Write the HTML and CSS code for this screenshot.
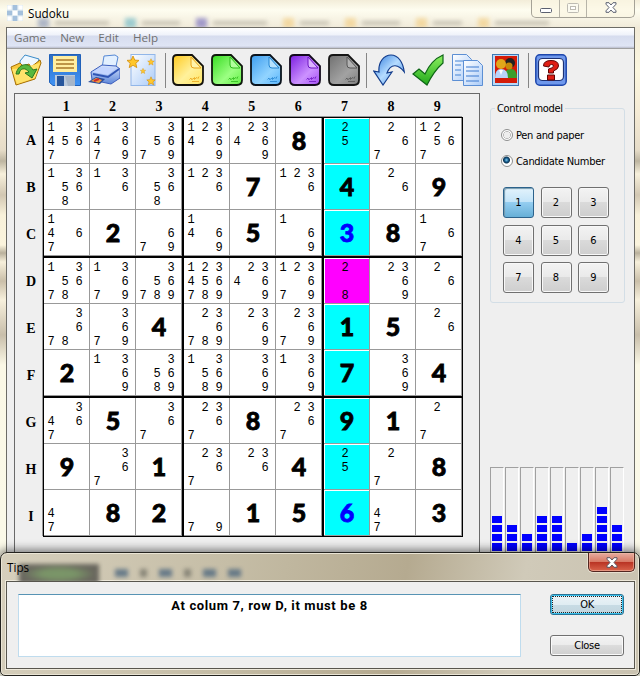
FILE: index.html
```
<!DOCTYPE html>
<html lang="en">
<head>
<meta charset="utf-8">
<title>Sudoku</title>
<link rel="stylesheet" href="styles.css">
</head>
<body>
<svg class="defs" width="0" height="0">
  <defs>
    <linearGradient id="gy" x1="0" y1="0" x2="1" y2="1"><stop offset="0" stop-color="#ffc91e"/><stop offset=".55" stop-color="#fff19b"/><stop offset="1" stop-color="#ffe566"/></linearGradient>
    <linearGradient id="gg" x1="0" y1="0" x2="1" y2="1"><stop offset="0" stop-color="#35dc20"/><stop offset=".6" stop-color="#9cff83"/><stop offset="1" stop-color="#62ef45"/></linearGradient>
    <linearGradient id="gb" x1="0" y1="0" x2="1" y2="1"><stop offset="0" stop-color="#3b9cef"/><stop offset=".6" stop-color="#92d4ff"/><stop offset="1" stop-color="#58b4fb"/></linearGradient>
    <linearGradient id="gp" x1="0" y1="0" x2="1" y2="1"><stop offset="0" stop-color="#7a1ce0"/><stop offset=".6" stop-color="#cc92ff"/><stop offset="1" stop-color="#a34cf4"/></linearGradient>
    <linearGradient id="gk" x1="0" y1="0" x2="1" y2="1"><stop offset="0" stop-color="#707070"/><stop offset=".6" stop-color="#a2a2a2"/><stop offset="1" stop-color="#7e7e7e"/></linearGradient>
    <linearGradient id="arrow" x1="0" y1="0" x2="1" y2="1"><stop offset="0" stop-color="#2a77dc"/><stop offset=".5" stop-color="#b5dcff"/><stop offset="1" stop-color="#3c83e0"/></linearGradient>
    <linearGradient id="tick" x1="0" y1="0" x2="0" y2="1"><stop offset="0" stop-color="#8cf060"/><stop offset="1" stop-color="#21a81a"/></linearGradient>
    <linearGradient id="sheet" x1="0" y1="0" x2="1" y2="1"><stop offset="0" stop-color="#fff"/><stop offset="1" stop-color="#aacbf8"/></linearGradient>
    <linearGradient id="disk" x1="0" y1="0" x2="0" y2="1"><stop offset="0" stop-color="#2f6fc4"/><stop offset="1" stop-color="#3f93f5"/></linearGradient>
    <linearGradient id="print" x1="0" y1="0" x2="0" y2="1"><stop offset="0" stop-color="#d9e6ff"/><stop offset="1" stop-color="#5d86d8"/></linearGradient>
    <path id="star" d="M0-6 1.8-1.9 6-1.6 2.8 1.3 3.8 5.6 0 3.3-3.8 5.6-2.8 1.3-6-1.6-1.8-1.9Z"/>
    <path id="scribble" d="m17.500 25.500 1.500-1.500.5 1.500 1.500-.5 1.500-1.500v2l1.500-1.500 1-.5 1 1 1-2M20 27.500h7" fill="none" stroke="currentColor" stroke-width=".8"/>
  </defs>
</svg>
<div class="desktop">
  <main class="window">
    <header class="titlebar">
      <svg class="app-icon" width="16" height="16"><rect width="16" height="16" fill="#f6fafc"/><path d="M5.500 0h5v5h-5zM0 5.500h5v5H0zM11 5.500h5v5h-5zM5.500 11h5v5h-5z" fill="#a4c0dc"/><path d="M0 0h5v5H0zM11 0h5v5h-5zM5.500 5.500h5v5h-5zM0 11h5v5H0zM11 11h5v5h-5z" fill="#fff" stroke="#cfdeea" stroke-width=".6"/></svg>
      <h1>Sudoku</h1>
      <div class="ghosts"><i class="g1"></i><i class="w l"></i><i class="g2"></i><i class="w"></i><i class="g3"></i><i class="w l"></i><i class="g4"></i><i class="w s"></i><i class="g4"></i><i class="w"></i><i class="g4"></i><i class="w s"></i><i class="g4"></i><i class="w l"></i></div>
      <div class="controls">
        <span class="c-min"><svg width="12" height="5"><rect x=".5" y=".5" width="11" height="4" rx="1" fill="#fff" stroke="#5b6070"/></svg></span>
        <span class="c-max"><svg width="12" height="10"><rect x=".5" y=".5" width="11" height="9" rx="1" fill="#fbfaf0" stroke="#bdbbb3"/><rect x="3.500" y="3.500" width="5" height="3" fill="#fff" stroke="#bdbbb3"/></svg></span>
        <span class="c-close"><svg width="12" height="11" viewBox="0 0 12 11"><path d="M1 .7h3L6 3 8 .7h3v1.500L8 5.500l3 3.300v1.500H8L6 8l-2 2.300H1V8.800l3-3.300L1 2.200z" fill="#fff" stroke="#5b6070"/></svg></span>
      </div>
    </header>
    <div class="client">
      <nav class="menu"><span>Game</span><span>New</span><span>Edit</span><span>Help</span></nav>
      <div class="toolbar">
        <svg viewBox="0 0 32 32"><path d="M10 7 15 1l14 4-5 15-13 3z" fill="#eef7ff" stroke="#3a8bc8"/><path d="M1 13 10 9l3 3 6-2 2 3 9-7 1 3-6 16L6 31z" fill="#f9c83a" stroke="#a56f05"/><path d="M2 15 12 14l18-5-5 15L7 30z" fill="#ffe36b"/><path d="M6 20C8 10 18 7 23 16l4-1-5 9-7-5 4-1c-4-5-9-4-10 2z" fill="#56b83e" stroke="#26781f"/></svg>
        <svg viewBox="0 0 32 32"><path d="M.5.5h31v31H4l-3.500-3z" fill="url(#disk)" stroke="#2161b9"/><rect x="4" y="2" width="24" height="16" fill="#ffeea0"/><path d="M7 6h18M7 10h18M7 14h18" stroke="#a9782a" stroke-width="1.500"/><rect x="6" y="21" width="20" height="11" fill="#b9c9dc"/><rect x="8" y="22" width="7" height="10" fill="#27569c"/><path d="M16 22h10v10h-7z" fill="#a6b5c8"/></svg>
        <svg viewBox="0 0 32 32"><path d="M14 14 16 2l11-1 3 2-3 14z" fill="#e3f0ff" stroke="#5588d5"/><path d="M3 18 14 11l14 1 4 3v9l-9 6-19-4z" fill="url(#print)" stroke="#3c5ebd"/><path d="m4 18 10-5 13 2-7 6z" fill="#c4d5ff"/><path d="m5 20 15 3 11-8" fill="none" stroke="#3055b5" stroke-width="2"/><path d="m0 28 8-5 9 2-5 5z" fill="#2c4d98"/><path d="m3 27 5-3 6 2-3 3z" fill="#f29a3c"/><path d="m6 27 5-2" stroke="#cc2a30" stroke-width="2"/></svg>
        <svg viewBox="0 0 32 32"><rect x="4" y=".5" width="24" height="31" fill="url(#sheet)" stroke="#91b6e9"/><g fill="#ffc72c" stroke="#d38b06" stroke-width=".8"><use href="#star" x="6" y="8"/><use href="#star" transform="translate(24 8) scale(.55)"/><use href="#star" transform="translate(16 17) scale(.45)"/><use href="#star" transform="translate(24 27) scale(.7)"/></g></svg>
        <i class="sep"></i>
        <svg viewBox="0 0 32 32" color="#e9a319"><path d="M5 1h15l11 11v14q0 5-5 5H6q-5 0-5-5V5q0-4 4-4z" fill="url(#gy)" stroke="#14120c" stroke-width="1.800"/><path d="M19 3v8q0 3 3 3h7z" fill="#fff3a9" stroke="currentColor"/><use href="#scribble"/></svg>
        <svg viewBox="0 0 32 32" color="#2db91b"><path d="M5 1h15l11 11v14q0 5-5 5H6q-5 0-5-5V5q0-4 4-4z" fill="url(#gg)" stroke="#0e180c" stroke-width="1.800"/><path d="M19 3v8q0 3 3 3h7z" fill="#b1ff9d" stroke="currentColor"/><use href="#scribble"/></svg>
        <svg viewBox="0 0 32 32" color="#2484d0"><path d="M5 1h15l11 11v14q0 5-5 5H6q-5 0-5-5V5q0-4 4-4z" fill="url(#gb)" stroke="#0b131c" stroke-width="1.800"/><path d="M19 3v8q0 3 3 3h7z" fill="#b6e2ff" stroke="currentColor"/><use href="#scribble"/></svg>
        <svg viewBox="0 0 32 32" color="#6c15c2"><path d="M5 1h15l11 11v14q0 5-5 5H6q-5 0-5-5V5q0-4 4-4z" fill="url(#gp)" stroke="#120a1c" stroke-width="1.800"/><path d="M19 3v8q0 3 3 3h7z" fill="#dcb4ff" stroke="currentColor"/><use href="#scribble"/></svg>
        <svg viewBox="0 0 32 32" color="#575757"><path d="M5 1h15l11 11v14q0 5-5 5H6q-5 0-5-5V5q0-4 4-4z" fill="url(#gk)" stroke="#151515" stroke-width="1.800"/><path d="M19 3v8q0 3 3 3h7z" fill="#b3b3b3" stroke="currentColor"/><use href="#scribble"/></svg>
        <i class="sep"></i>
        <svg viewBox="0 0 32 32"><path d="M.8 17 6 18C5 8 11 1 18 1c7 0 12 7 13.300 17C26 11 18 8 14 19l5-1-9 13z" fill="url(#arrow)" stroke="#123c8c" stroke-width="1.200"/></svg>
        <svg viewBox="0 0 32 32"><path d="m1 20 6-5 6 5C17 11 24 4 31 1v8C24 15 19 23 15 31z" fill="url(#tick)" stroke="#0d6416" stroke-width="1.200"/></svg>
        <svg viewBox="0 0 32 32"><path d="M1.500.5h14l5 5v21h-19z" fill="url(#sheet)" stroke="#5c8fd4"/><path d="M4 7h10M4 11h6M4 16h6M4 21h6" stroke="#4584d4"/><path d="M12.500 6.500h14l5 5v20h-19z" fill="url(#sheet)" stroke="#5c8fd4"/><path d="M15 13h13M15 17h13M15 22h13M15 27h13" stroke="#3b79cf"/></svg>
        <svg viewBox="0 0 32 32"><rect x="2.500" y=".5" width="26" height="31" fill="#b8d8f8" stroke="#3c78b4"/><rect x="5" y="2" width="22" height="27" fill="#d41b08"/><circle cx="20" cy="9" r="5" fill="#222"/><path d="M14 24q0-9 7-9 6 0 6 9z" fill="#3b9e2d"/><circle cx="19" cy="12" r="3.500" fill="#c88a0a"/><circle cx="11" cy="10" r="5" fill="#e1a71a"/><path d="M5 24q0-9 6-9 7 0 7 9z" fill="#b9d4fa"/><path d="m9 16 2 5 2-5" fill="#fff"/></svg>
        <i class="sep"></i>
        <svg viewBox="0 0 32 32"><rect x=".8" y=".8" width="30.400" height="30.400" rx="4" fill="#6f98ec" stroke="#1d46ac" stroke-width="1.500"/><rect x="3.500" y="4.500" width="25" height="22" rx="4" fill="#fff" stroke="#1c3174" stroke-width="1.200"/><path d="M8.500 12q0-5.500 7.500-5.500t7.500 5.500q0 3-5 5v2h-5v-4q5-1 5-3 0-1.500-2-1.500-2.500 0-2.500 2.500zM12.500 21h7v5h-7z" fill="#df1d13" stroke="#5f0606"/></svg>
      </div>
      <div class="content">
        <section class="board">
          <div class="corner"></div>
          <div class="cols" id="cols"></div>
          <div class="rows" id="rows"></div>
          <div class="grid" id="grid"></div>
        </section>
        <aside class="side">
          <fieldset class="control">
            <legend>Control model</legend>
            <label><i class="radio"></i><span>Pen and paper</span></label>
            <label><i class="radio on"></i><span>Candidate Number</span></label>
            <div class="pad"><b class="sel">1</b><b>2</b><b>3</b><b>4</b><b>5</b><b>6</b><b>7</b><b>8</b><b>9</b></div>
          </fieldset>
          <div class="meters" id="meters"></div>
        </aside>
      </div>
    </div>
  </main>
  <section class="dialog">
    <header>
      <h2>Tips</h2>
      <div class="dghost"><i class="blk"></i><i class="d1"></i><i class="d2"></i><i class="d1"></i><i class="d2"></i><i class="d1"></i><i class="d1"></i></div>
      <span class="dclose"><svg width="12" height="11" viewBox="0 0 12 11"><path d="M1 .7h3L6 3 8 .7h3v1.500L8 5.500l3 3.300v1.500H8L6 8l-2 2.300H1V8.800l3-3.300L1 2.200z" fill="#fff" stroke="#5b5560"/></svg></span>
    </header>
    <div class="dbody">
      <div class="message"><span>At colum 7, row D, it must be 8</span></div>
      <div class="buttons"><button class="ok"><span>OK</span></button><button>Close</button></div>
    </div>
  </section>
</div>
<script src="board.js"></script>
</body>
</html>
```
FILE: styles.css
```
* { box-sizing: border-box; }
body { margin: 0; font: 11px "DejaVu Sans Condensed", "DejaVu Sans", sans-serif; color: #000; }
h1, h2 { margin: 0; font-weight: 400; }
.defs { position: absolute; }
.desktop { position: relative; width: 640px; height: 676px; overflow: hidden;
  background: linear-gradient(#f6f1dd 0, #fdfbee 12px, #f1ead8 26px, #fcf7df 70px, #f6ecd6 110px, #e6dcc8 150px, #bdb5a0 161px, #f7f0db 174px, #d2c7b2 195px, #f8f1da 215px, #fbf4dd 245px, #b9b09c 253px, #f7f0db 262px, #cabfa9 281px, #f7f0dc 300px, #c8beaa 335px, #fbf8e6 365px, #fbfaea 676px); }
.window { height: 676px; display: flex; flex-direction: column; }
.titlebar { height: 27px; display: flex; align-items: flex-start; padding: 0 5px 0 7px; flex: none; position: relative; overflow: hidden; background: linear-gradient(#f3edd9, #fefdf0 10px, #f1ebda); }
.app-icon { margin-top: 5px; }
.titlebar h1 { font: 11.7px/16px "Open Sans", sans-serif; margin: 5px 0 0 5px; position: relative; z-index: 1; }
.ghosts { position: absolute; left: 28px; top: 18px; display: flex; gap: 6px; filter: blur(2px); opacity: .6; align-items: center; }
.ghosts i { width: 11px; height: 10px; flex: none; margin-left: 10px; }
.ghosts .w { width: 38px; height: 4px; background: #a8a395; margin-left: 0; }
.ghosts .l { width: 54px; }
.ghosts .s { width: 29px; }
.ghosts .g1 { background: #8191b6; } .ghosts .g2 { background: #64b4c4; } .ghosts .g3 { background: #6b61ba; } .ghosts .g4 { background: #f2ca7b; }
.controls { position: relative; margin-left: auto; display: flex; width: 104px; height: 18px; border: 1px solid #a5a297; border-top: 0; border-radius: 0 0 5px 5px; background: #faf6e3b0; }
.controls span { display: flex; align-items: center; justify-content: center; border-right: 1px solid #b7b4a8; padding-bottom: 2px; }
.controls .c-min { width: 28px; padding-top: 5px; } .c-max { width: 27px; } .controls .c-close { flex: 1; border: 0; }
.client { flex: 1; margin: 0 5px 0 6px; border: 1px solid #6c6b66; border-bottom: 0; background: #efefef; }
.menu { height: 20px; display: flex; gap: 14px; padding-left: 7px; font: 11.6px/20px "Open Sans", sans-serif; color: #707070; background: linear-gradient(#fff 0, #eff2fa 7px, #d6dcee 8px, #dfe5f5 18px, #b8bccb 20px); }
.toolbar { height: 45px; border-top: 1px solid #a0a0a0; display: flex; gap: 7px; padding: 5px 0 0 3px; }
.toolbar svg { width: 32px; height: 32px; flex: none; }
.toolbar .sep { width: 1px; height: 35px; margin: -1px -1px 0; background: #858585; flex: none; }
.content { display: flex; }
.board { width: 466px; height: 480px; margin: 0 0 0 7px; border: 1px solid #696969; border-bottom: 0; display: grid; grid-template: 22px 1fr / 27px 1fr; }
.cols { display: flex; padding-left: 1px; }
.cols span { width: 46.400px; text-align: center; font: bold 14px/25px "Liberation Serif", serif; }
.rows { display: flex; flex-direction: column; padding-left: 5px; }
.rows span { height: 47px; width: 22px; text-align: center; font: bold 14px/49px "Liberation Serif", serif; }
.grid { width: 420px; height: 420px; border: 1px solid #000; box-shadow: -1px -1px #999; background: #000; display: grid; grid-template: repeat(3, 138px) / repeat(3, 138px); gap: 2px; margin-left: 1px; margin-top: 1px; }
.block { display: grid; grid-template: repeat(3, 46px) / repeat(3, 46px); }
.cell { background: #fff; border: solid #999; border-width: 0 1px 1px 0; display: grid; grid-template: repeat(3, 14px) / repeat(3, 14px); padding: 3px 0 0; font: 12px/14px "Liberation Mono", monospace; text-align: center; }
.cell.hl { background: linear-gradient(#0ff, #0ff) 1px 1px no-repeat #fff; }
.cell.hit { background: linear-gradient(#f0f, #f0f) 1px 1px no-repeat #fff; }
.cell.big { display: flex; justify-content: center; align-items: center; padding: 0 0 0 1px; font: 900 25px/25px Lato, sans-serif; -webkit-text-stroke: .8px currentColor; }
.cell.blue { color: #00f; }
.side { margin-left: 10px; width: 135px; padding-top: 8px; }
.control { margin: 0; height: 202px; border: 1px solid #d3dee6; border-radius: 3px; padding: 0 0 0 11px; min-width: 0; }
.control legend { margin-left: -7px; padding: 0 2px; line-height: 15px; letter-spacing: -.3px; }
.control label { display: flex; align-items: center; gap: 3px; height: 26px; white-space: nowrap; letter-spacing: -.3px; margin-left: -1px; }
.control legend + label { margin-top: 6px; }
.radio { width: 12px; height: 12px; border-radius: 50%; border: 1px solid #8e8f8f; background: radial-gradient(#eee 45%, #bbb 50%, #fff 60%); flex: none; }
.radio.on { background: radial-gradient(circle at 45% 40%, #7ccdf0 0, #155788 2px, #0c3553 3px, #fff 4px); }
.pad { display: grid; grid-template: repeat(3, 31px) / repeat(3, 31px); gap: 6.500px; margin: 13px 0 0 1px; }
.pad b { display: flex; align-items: center; justify-content: center; font-weight: 400; border: 1px solid #707070; border-radius: 3px; background: linear-gradient(#f3f3f3, #e9e9e9 50%, #dadada 50%, #cecece); box-shadow: inset 0 0 0 1px #f8f8f8; }
.pad .sel { border-color: #2c628b; background: linear-gradient(#e3f3fc, #c1e3f8 50%, #94cdf0 50%, #66afd7); box-shadow: inset 1px 1px 1px #7599ad; }
.meters { margin-top: 164px; display: flex; gap: 1px; height: 90px; }
.meters div { width: 14px; border: solid #a0a0a0; border-width: 1px 1px 0 1px; border-right-color: #fff; padding: 0 1px 6px; display: flex; flex-direction: column; justify-content: flex-end; gap: 2px; }
.meters i { height: 7px; background: #00f; flex: none; }
.meters i:last-child { height: 8px; }
.dialog { position: absolute; left: 0; top: 552px; width: 640px; height: 124px; border: 1px solid #24231f; border-radius: 7px 7px 5px 5px; padding: 0 4px 6px 5px; box-shadow: inset 0 0 0 1px #eae5d5, 0 -1px 8px 2px #0007; background: linear-gradient(100deg, #d6cfbc, #c5bda6 35%, #b5aa90 62%, #d0cab9 80%, #c9c2b0); }
.dialog header { height: 28px; display: flex; position: relative; overflow: hidden; }
.dialog h2 { font: 11.7px/28px "Open Sans"; margin-left: 1px; position: relative; z-index: 1; }
.dghost { position: absolute; left: 13px; top: 11px; display: flex; gap: 12px; filter: blur(2px); opacity: .8; }
.dghost i { width: 13px; height: 8px; margin-top: 5px; background: #516a80; flex: none; }
.dghost .blk { width: 80px; height: 20px; margin: 0 4px 0 0; background: radial-gradient(ellipse, #658855 30%, #504f49 65%); }
.dghost .d2 { width: 7px; background: #77766b; }
.dclose { position: relative; margin-left: auto; width: 47px; height: 19px; border: 1px solid #52251f; border-top: 0; border-radius: 0 0 5px 5px; display: flex; justify-content: center; align-items: center; background: linear-gradient(#e6ada0, #d87965 48%, #b83222 50%, #d9634b); box-shadow: inset 0 0 0 1px #f2bbaa90, 0 0 0 1px #e7dfd0; }
.dbody { height: 88px; border: 1px solid #58564e; box-shadow: 0 0 0 1px #eee9db; background: #efefef; display: flex; padding: 12px 10px 0 11px; justify-content: space-between; }
.message { width: 503px; height: 63px; border: 1px solid #bfdcee; border-top-color: #5793b4; background: #fff; text-align: center; font: 700 13px/21px Roboto, sans-serif; letter-spacing: .62px; }
.buttons { display: flex; flex-direction: column; gap: 20px; }
.buttons button { width: 74px; height: 21px; padding: 1px; font: 11px/15px "DejaVu Sans Condensed", "DejaVu Sans", sans-serif; border: 1px solid #707070; border-radius: 3px; background: linear-gradient(#f3f3f3, #ebebeb 50%, #dcdcdc 50%, #cfcfcf); box-shadow: inset 0 0 0 1px #fafafa; letter-spacing: -.3px; }
.buttons .ok { border-color: #2b7294; box-shadow: inset 0 0 0 1px #39c1ed; background: linear-gradient(#edf3f6, #e0edf3 50%, #c8dce5 50%, #c2d5de); }
.ok span { display: block; border: 1px dotted #222; height: 17px; }
```
FILE: board.js
```
const rows = [
  '134567 134679 35679 123469 23469 =8 25 267 12567',
  '13568 136 3568 1236 =7 1236 =4 26 =9',
  '1467 =2 679 1469 =5 169 b3 =8 167',
  '135678 13679 356789 123456789 23469 123679 28 2369 26',
  '3678 3679 =4 236789 2369 23679 =1 =5 26',
  '=2 1369 35689 135689 369 1369 =7 369 =4',
  '3467 =5 367 2367 =8 2367 =9 =1 27',
  '=9 367 =1 2367 236 =4 25 27 =8',
  '47 =8 =2 79 =1 =5 b6 47 =3'
].map(r => r.split(' '));

function add(parent, tag, cls, text) {
  const el = document.createElement(tag);
  if (cls) el.className = cls;
  if (text) el.textContent = text;
  parent.append(el);
  return el;
}
const get = id => document.getElementById(id);
for (const c of '123456789') add(get('cols'), 'span', '', c);
for (const r of 'ABCDEFGHI') add(get('rows'), 'span', '', r);

for (let b = 0; b < 9; b++) {
  const block = add(get('grid'), 'div', 'block');
  for (let k = 0; k < 9; k++) {
    const r = Math.floor(b / 3) * 3 + Math.floor(k / 3);
    const c = (b % 3) * 3 + k % 3;
    const v = rows[r][c];
    const shade = c === 6 ? (r === 3 ? ' hit' : ' hl') : '';
    if (v[0] === '=' || v[0] === 'b') {
      add(block, 'div', 'cell big' + shade + (v[0] === 'b' ? ' blue' : ''), v[1]);
    } else {
      const cell = add(block, 'div', 'cell' + shade);
      for (const n of '123456789') add(cell, 'span', '', v.includes(n) ? n : '');
    }
  }
}
for (const n of [4, 3, 2, 4, 4, 1, 2, 5, 3]) {
  const m = add(get('meters'), 'div');
  for (let i = 0; i < n; i++) add(m, 'i');
}
```
